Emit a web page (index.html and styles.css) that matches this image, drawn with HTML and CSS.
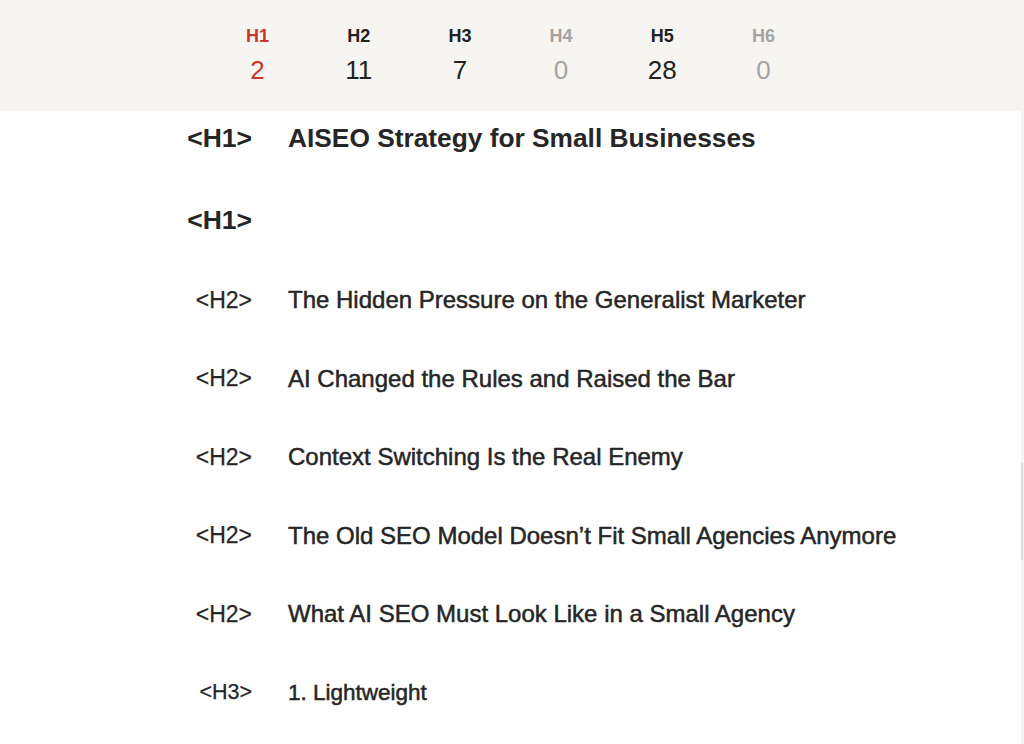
FILE: index.html
```html
<!DOCTYPE html>
<html lang="en">
<head>
<meta charset="utf-8">
<title>Heading structure</title>
<link rel="stylesheet" href="styles.css">
</head>
<body>
<div class="page">
  <main class="main">
    <header class="summary">
      <div class="stat stat-h1"><span class="stat-label">H1</span><span class="stat-num">2</span></div>
      <div class="stat"><span class="stat-label">H2</span><span class="stat-num">11</span></div>
      <div class="stat"><span class="stat-label">H3</span><span class="stat-num">7</span></div>
      <div class="stat stat-empty"><span class="stat-label">H4</span><span class="stat-num">0</span></div>
      <div class="stat"><span class="stat-label">H5</span><span class="stat-num">28</span></div>
      <div class="stat stat-empty"><span class="stat-label">H6</span><span class="stat-num">0</span></div>
    </header>
    <ul class="outline">
      <li class="row row-h1"><span class="tag">&lt;H1&gt;</span><span class="title">AISEO Strategy for Small Businesses</span></li>
      <li class="row row-h1"><span class="tag">&lt;H1&gt;</span><span class="title"></span></li>
      <li class="row row-h2"><span class="tag">&lt;H2&gt;</span><span class="title">The Hidden Pressure on the Generalist Marketer</span></li>
      <li class="row row-h2"><span class="tag">&lt;H2&gt;</span><span class="title">AI Changed the Rules and Raised the Bar</span></li>
      <li class="row row-h2"><span class="tag">&lt;H2&gt;</span><span class="title">Context Switching Is the Real Enemy</span></li>
      <li class="row row-h2"><span class="tag">&lt;H2&gt;</span><span class="title">The Old SEO Model Doesn’t Fit Small Agencies Anymore</span></li>
      <li class="row row-h2"><span class="tag">&lt;H2&gt;</span><span class="title">What AI SEO Must Look Like in a Small Agency</span></li>
      <li class="row row-h3"><span class="tag">&lt;H3&gt;</span><span class="title">1. Lightweight</span></li>
    </ul>
  </main>
  <div class="scrolltrack"><div class="scrollthumb"></div></div>
</div>
</body>
</html>
```

FILE: styles.css
```css
* { box-sizing: border-box; }
html, body { margin: 0; padding: 0; }
body {
  background: #ffffff;
  color: #262626;
  font-family: "Liberation Sans", Arial, Helvetica, sans-serif;
  height: 744px;
  overflow: hidden;
}
.page {
  display: flex;
  height: 744px;
}
.main {
  flex: 1;
  display: flex;
  flex-direction: column;
}
.summary {
  background: #f7f5f1;
  height: 111px;
  display: grid;
  grid-template-columns: repeat(6, 101.2px);
  justify-content: center;
  align-content: start;
  padding-top: 24px;
}
.stat {
  display: flex;
  flex-direction: column;
  align-items: center;
  color: #222222;
}
.stat-label {
  font-weight: bold;
  font-size: 18px;
  line-height: 24px;
}
.stat-num {
  font-size: 26px;
  line-height: 30px;
  margin-top: 7px;
}
.stat-h1 { color: #c8382c; }
.stat-empty { color: #a3a3a3; }

.outline {
  list-style: none;
  margin: 0;
  padding: 0 0 0 150px;
  display: flex;
  flex-direction: column;
  gap: 28px;
}
.row {
  display: flex;
  align-items: center;
  gap: 36px;
  color: #262626;
}
.tag {
  width: 102px;
  text-align: right;
  flex-shrink: 0;
  -webkit-text-stroke: 0.25px #262626;
}
.title {
  -webkit-text-stroke: 0.5px #262626;
}
.row-h1 { height: 54px; }
.row-h1 .tag { font-size: 26.5px; font-weight: bold; -webkit-text-stroke: 0; }
.row-h1 .title { font-size: 26.3px; font-weight: bold; -webkit-text-stroke: 0; }
.row-h2 { height: 50.5px; }
.row-h2 .tag { font-size: 23px; }
.row-h2 .title { font-size: 24px; }
.row-h3 { height: 50px; }
.row-h3 .tag { font-size: 21.5px; }
.row-h3 .title { font-size: 22.5px; }

.scrolltrack {
  width: 3px;
  background: #f7f5f1;
  flex-shrink: 0;
}
.scrollthumb {
  width: 2px;
  height: 97px;
  margin-top: 463px;
  background: #dcdad5;
}
```
